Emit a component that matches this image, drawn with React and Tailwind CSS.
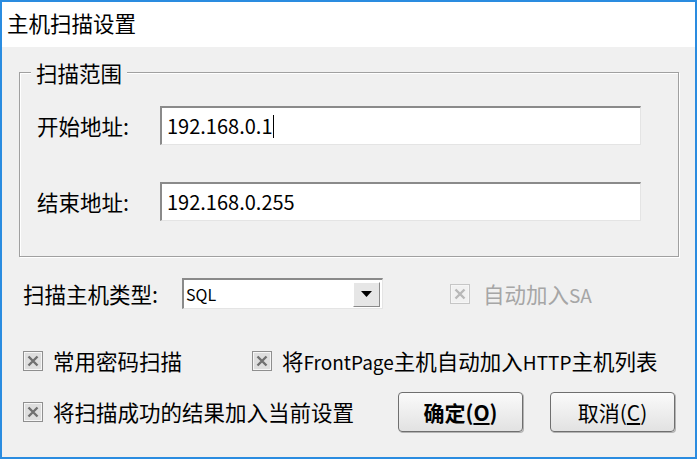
const CheckBox = ({ disabled }) => (
  <svg width="20" height="20" viewBox="0 0 20 20" className="shrink-0">
    <rect x="0.5" y="0.5" width="19" height="19" fill="#f6f6f6" stroke={disabled ? '#c6c6c6' : '#8f8f8f'} />
    <rect x="2" y="2" width="16" height="16" fill={disabled ? '#f1f1f1' : '#dedede'} />
    <path d="M5.5 5.5L14.5 14.5M14.5 5.5L5.5 14.5" stroke={disabled ? '#b8b8b8' : '#707070'} strokeWidth="2.4" />
  </svg>
);

const sunken =
  'border-t-2 border-l-2 border-b border-r border-t-[#8a8a8a] border-l-[#8a8a8a] border-b-[#e4e4e4] border-r-[#e4e4e4] bg-white';

const AddrRow = ({ label, value, caret }) => (
  <div className="flex items-center">
    <span className="w-[123px] shrink-0">{label}</span>
    <div className={`${sunken} w-[481px] h-[39px] flex items-center pl-[5px] text-[20px]`}>
      <span>{value}</span>
      {caret && <span className="w-px h-[23px] bg-black ml-[1px]"></span>}
    </div>
  </div>
);

const Button = ({ bold, text, hotkey }) => (
  <button
    className={`w-[125px] h-[40px] rounded-[4px] border border-[#6f6f6f] bg-linear-to-b from-[#fafafa] to-[#e2e2e2] shadow-[1px_1px_0_#b4b4b4] text-black text-[21px] leading-none ${bold ? 'font-bold' : ''}`}
  >
    {text}(<span className="underline underline-offset-2">{hotkey}</span>)
  </button>
);

export default function App() {
  return (
    <div className="w-[698px] h-[459px] bg-white">
      <div className="w-[697px] h-[459px] border-2 border-[#2a8ce0] flex flex-col text-[21.5px] text-black leading-none font-[family-name:'Noto_Sans_CJK_SC',sans-serif]">
        <div className="h-[45px] bg-white flex items-center pl-[5px] pb-[4px]">主机扫描设置</div>

        <div className="flex-1 bg-[#f0f0f0] flex flex-col">
          <div className="relative mt-[25px] ml-[17px] w-[660px] h-[185px] border border-[#a0a0a0] shadow-[inset_1px_1px_0_#fff,1px_1px_0_#fff] pl-[17px] pt-[33px] flex flex-col gap-[37px]">
            <span className="absolute -top-[11px] left-[11px] px-[5px] bg-[#f0f0f0]">扫描范围</span>
            <AddrRow label="开始地址:" value="192.168.0.1" caret />
            <AddrRow label="结束地址:" value="192.168.0.255" />
          </div>

          <div className="flex items-center mt-[21px] ml-[21px] h-[31px]">
            <span className="w-[159px] shrink-0">扫描主机类型:</span>
            <div className={`${sunken} w-[201px] h-[31px] flex items-center justify-between pl-[2px] pr-[2px]`}>
              <span className="text-[16px]">SQL</span>
              <div className="w-[27px] h-[25px] bg-[#e6e6e6] border border-t-white border-l-white border-b-[#8a8a8a] border-r-[#8a8a8a] flex items-center justify-center">
                <svg width="11" height="6" viewBox="0 0 11 6">
                  <path d="M0 0H11L5.5 6Z" fill="#000" />
                </svg>
              </div>
            </div>
            <div className="flex items-center gap-[13px] ml-[67px] text-[#a6a6a6]">
              <CheckBox disabled />
              <span>自动加入<span className="text-[19px]">SA</span></span>
            </div>
          </div>

          <div className="flex items-center mt-[37px] ml-[21px] h-[30px]">
            <div className="w-[229px] flex items-center gap-[10px]">
              <CheckBox />
              <span>常用密码扫描</span>
            </div>
            <div className="flex items-center gap-[10px]">
              <CheckBox />
              <span>
                将<span className="text-[19px]">FrontPage</span>主机自动加入<span className="text-[19px]">HTTP</span>主机列表
              </span>
            </div>
          </div>

          <div className="flex items-center mt-[16px] ml-[21px] h-[40px]">
            <div className="w-[375px] flex items-center gap-[10px]">
              <CheckBox />
              <span>将扫描成功的结果加入当前设置</span>
            </div>
            <div className="flex gap-[27px]">
              <Button bold text="确定" hotkey="O" />
              <Button text="取消" hotkey="C" />
            </div>
          </div>
        </div>
      </div>
    </div>
  );
}
